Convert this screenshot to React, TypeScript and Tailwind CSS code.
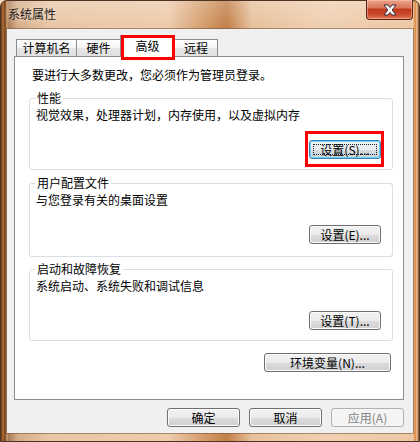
import React from "react";

const FONT = "font-['Noto_Sans_CJK_SC','Noto_Sans',sans-serif]";

type BtnProps = {
  children: React.ReactNode;
  w: string;
  focused?: boolean;
  disabled?: boolean;
  className?: string;
};

function Button({ children, w, focused, disabled, className = "" }: BtnProps) {
  let look =
    "border-[#707070] text-black bg-[linear-gradient(#f2f2f2_0%,#ebebeb_50%,#dddddd_50%,#cfcfcf_100%)] shadow-[inset_0_0_0_1px_#fbfbfb]";
  if (focused)
    look =
      "border-[#3c7fb1] text-black bg-[linear-gradient(#f2f5f7_0%,#e8edf0_50%,#d5dde2_50%,#c9d3d9_100%)] shadow-[inset_0_0_0_1px_#6fd3f7]";
  if (disabled)
    look = "border-[#adb2b5] text-[#838383] bg-[#f4f4f4]";
  return (
    <div
      className={`relative flex h-[19px] shrink-0 items-center justify-center rounded-[3px] border text-[12px] leading-[14px] ${look} ${w} ${className}`}
    >
      {focused && (
        <span className="pointer-events-none absolute inset-[3px] border border-dotted border-[#222]" />
      )}
      <span className="relative">{children}</span>
    </div>
  );
}

function Tab({ label, w, active }: { label: string; w: string; active?: boolean }) {
  if (active)
    return (
      <div
        className={`relative z-10 -ml-px mb-[-1px] flex h-[22px] items-start justify-center border border-b-0 border-[#898c95] bg-white pt-[3px] text-[12px] leading-[14px] ${w}`}
      >
        {label}
      </div>
    );
  return (
    <div
      className={`-ml-px flex h-[17px] items-start justify-center border border-b-0 border-[#898c95] bg-[linear-gradient(#ffffff_0%,#f3f3f3_50%,#e6e6e6_51%,#e0e0e0_100%)] pt-[1px] text-[12px] leading-[14px] first:ml-0 ${w}`}
    >
      {label}
    </div>
  );
}

function Group({
  title,
  text,
  button,
  h,
  className = "",
}: {
  title: string;
  text: string;
  button: string;
  h: string;
  className?: string;
}) {
  return (
    <fieldset
      className={`ml-[14px] w-[364px] rounded-[3px] border border-[#d5dfe5] pl-[5px] pr-[11px] ${h} ${className}`}
    >
      <legend className="px-[2px] text-[12px] leading-[14px]">{title}</legend>
      <div className="flex flex-col">
        <div className="ml-[1px] mt-[3px] text-[12px] leading-[14px]">{text}</div>
        <Button w="w-[72px]" className="mt-[18px] self-end" focused={button.includes("(S)")}>
          {button}
        </Button>
      </div>
    </fieldset>
  );
}

function CloseButton() {
  return (
    <div className="mr-[6px] mt-[-1px] ml-auto flex h-[20px] w-[47px] items-center justify-center rounded-b-[4px] border border-t-0 border-[#5a2418] bg-[linear-gradient(#eaa48c_0%,#d9775c_40%,#c23a1c_50%,#c9482a_75%,#e07a50_100%)] shadow-[inset_0_0_0_1px_rgba(255,210,190,0.45)]">
      <svg width="16" height="12" viewBox="0 0 16 12">
        <path
          d="M2 1 H6 L8 3.6 L10 1 H14 L10.2 6 L14 11 H10 L8 8.4 L6 11 H2 L5.8 6 Z"
          fill="#ffffff"
          stroke="#3b2a3a"
          strokeWidth="1"
          strokeLinejoin="round"
        />
      </svg>
    </div>
  );
}

export default function App() {
  return (
    <div className={`relative h-[442px] w-[420px] overflow-hidden bg-[#f5d6b8] ${FONT}`}>
      {/* window frame with tinted glass */}
      <div className="flex h-[442px] w-[420px] flex-col rounded-t-[7px] border border-[#4e3422] [background:linear-gradient(to_right,#5e3415_0px,#b8733a_2px,#6c3c1a_4px,#d8a878_6px,transparent_7px),linear-gradient(to_left,#6a4124_0px,#f2c090_2px,#d5853f_4px,#f3cfae_6px,transparent_7px),linear-gradient(to_bottom,rgba(255,255,255,0.22)_0px,rgba(255,255,255,0)_26px),linear-gradient(to_right,#8a5634_0%,#d6ad88_4%,#e9c7a6_12%,#edcbab_40%,#cf9461_50%,#c27f49_54%,#e7c19c_60%,#f0d0b2_78%,#ecc7a3_100%)]">
        {/* title bar */}
        <div className="flex h-[28px] shrink-0 items-start">
          <span className="ml-[7px] mt-[6px] text-[12px] leading-[14px] text-[#1b1b1b] [text-shadow:0_0_6px_rgba(255,240,225,0.9)]">
            系统属性
          </span>
          <CloseButton />
        </div>

        {/* client area */}
        <div className="ml-[6px] flex h-[404px] w-[406px] shrink-0 flex-col bg-[#f0f0f0] text-black shadow-[0_0_0_1px_rgba(110,80,55,0.55)]">
          {/* tabs */}
          <div className="ml-[9px] mt-[6px] flex h-[21px] items-end">
            <Tab label="计算机名" w="w-[61px]" />
            <Tab label="硬件" w="w-[45px]" />
            <Tab label="高级" w="w-[55px]" active />
            <Tab label="远程" w="w-[44px]" />
          </div>

          {/* tab page */}
          <div className="ml-[7px] flex h-[344px] w-[390px] flex-col border border-[#898c95] bg-white">
            <div className="ml-[17px] mt-[11px] text-[12px] leading-[14px]">
              要进行大多数更改，您必须作为管理员登录。
            </div>

            <Group
              title="性能"
              text="视觉效果，处理器计划，内存使用，以及虚拟内存"
              button="设置(S)..."
              h="h-[79px]"
              className="mt-[9px]"
            />
            <Group
              title="用户配置文件"
              text="与您登录有关的桌面设置"
              button="设置(E)..."
              h="h-[81px]"
              className="mt-[6px]"
            />
            <Group
              title="启动和故障恢复"
              text="系统启动、系统失败和调试信息"
              button="设置(T)..."
              h="h-[79px]"
              className="mt-[5px]"
            />

            <Button w="w-[127px]" className="mr-[12px] mt-[12px] self-end">
              环境变量(N)...
            </Button>
          </div>

          {/* dialog buttons */}
          <div className="mr-[9px] mt-[8px] flex justify-end gap-[9px]">
            <Button w="w-[73px]">确定</Button>
            <Button w="w-[73px]">取消</Button>
            <Button w="w-[73px]" disabled>
              应用(A)
            </Button>
          </div>
        </div>
      </div>

      {/* red highlight marks */}
      <div className="pointer-events-none absolute left-[121px] top-[35px] z-20 h-[25px] w-[54px] border-[3px] border-[#ff0000]" />
      <div className="pointer-events-none absolute left-[305px] top-[131px] z-20 h-[36px] w-[79px] border-[3px] border-[#ff0000]" />
    </div>
  );
}
